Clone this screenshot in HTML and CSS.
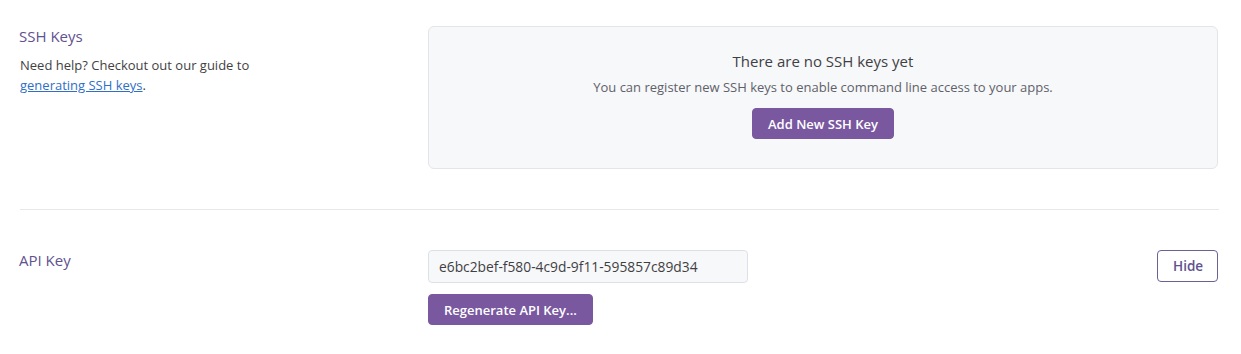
FILE: index.html
```html
<!DOCTYPE html>
<html lang="en">
<head>
  <meta charset="UTF-8" />
  <meta name="viewport" content="width=device-width, initial-scale=1.0"/>
  <title>Account Settings</title>
  <link rel="stylesheet" href="styles.css">
</head>
<body>
  <div class="settings">
    <!-- SSH keys -->
    <section class="setting-row">
      <div class="setting-info">
        <h2>SSH Keys</h2>
        <p>Need help? Checkout out our guide to <a href="#">generating SSH keys</a>.</p>
      </div>
      <div class="setting-body">
        <div class="empty-box">
          <h3>There are no SSH keys yet</h3>
          <p>You can register new SSH keys to enable command line access to your apps.</p>
          <button type="button" class="btn btn-primary">Add New SSH Key</button>
        </div>
      </div>
    </section>

    <!-- API key -->
    <section class="setting-row">
      <div class="setting-info">
        <h2>API Key</h2>
      </div>
      <div class="setting-body api">
        <div class="api-key">
          <input type="text" class="key-input" value="e6bc2bef-f580-4c9d-9f11-595857c89d34" readonly />
          <button type="button" class="btn btn-primary">Regenerate API Key...</button>
        </div>
        <button type="button" class="btn btn-outline">Hide</button>
      </div>
    </section>
  </div>
</body>
</html>
```

FILE: styles.css
```css
:root {
  --purple: #79589f;
  --heading: #5f528f;
  --text: #3f3f44;
  --muted: #5f6169;
  --link: #2f6fc6;
  --line: #e8e8eb;
  --box-bg: #f7f8fa;
  --box-border: #e3e5ea;
}

* {
  margin: 0;
  padding: 0;
  box-sizing: border-box;
  font-family: 'Open Sans', 'Noto Sans', sans-serif;
}

body {
  background: #fff;
  color: var(--text);
}

.settings {
  padding: 0 22px 0 20px;
}

.setting-row {
  display: grid;
  grid-template-columns: 408px 1fr;
  padding: 26px 1px 40px 0;
  border-bottom: 1px solid var(--line);
}

.setting-row:last-child {
  border-bottom: none;
  padding-top: 40px;
}

.setting-info h2 {
  font-size: 15px;
  font-weight: 400;
  line-height: 22px;
  color: var(--heading);
  margin-left: -1px;
  margin-top: -1px;
}

.setting-info p {
  font-size: 13px;
  line-height: 20px;
  margin-top: 8px;
  max-width: 250px;
}

.setting-info a {
  color: var(--link);
}

.empty-box {
  background: var(--box-bg);
  border: 1px solid var(--box-border);
  border-radius: 6px;
  padding: 23px 20px 29px;
  text-align: center;
}

.empty-box h3 {
  font-size: 15px;
  font-weight: 400;
  line-height: 22px;
}

.empty-box p {
  font-size: 13px;
  line-height: 20px;
  color: var(--muted);
  margin-top: 5px;
}

.empty-box .btn {
  margin-top: 11px;
}

.btn {
  height: 31px;
  padding: 0 15px;
  border-radius: 4px;
  font-size: 13px;
  font-weight: 600;
  cursor: pointer;
}

.btn-primary {
  background: var(--purple);
  border: 1px solid var(--purple);
  color: #fff;
}

.btn-outline {
  background: #fff;
  border: 1px solid #6c6194;
  color: var(--heading);
  width: 61px;
  height: 32px;
  font-size: 13.5px;
}

.setting-body.api {
  display: flex;
  justify-content: space-between;
  align-items: flex-start;
}

.api-key {
  display: flex;
  flex-direction: column;
  align-items: flex-start;
  gap: 11px;
}

.key-input {
  width: 320px;
  height: 33px;
  padding: 0 10px;
  background: var(--box-bg);
  border: 1px solid #dde1e7;
  border-radius: 4px;
  font-size: 13.8px;
  color: var(--text);
  outline: none;
}
```
